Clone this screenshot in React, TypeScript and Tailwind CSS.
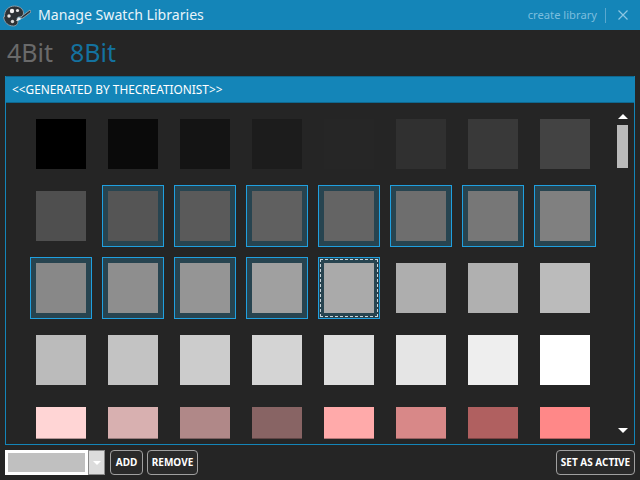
const grays = [
  "#000000", "#0a0a0a", "#141414", "#1c1c1c", "#262626", "#303030", "#393939", "#434343",
  "#4f4f4f", "#555555", "#5a5a5a", "#606060", "#646464", "#6e6e6e", "#777777", "#808080",
  "#888888", "#8e8e8e", "#959595", "#a0a0a0", "#aaaaaa", "#aeaeae", "#b0b0b0", "#bbbbbb",
  "#bbbbbb", "#c3c3c3", "#cccccc", "#d4d4d4", "#dddddd", "#e5e5e5", "#eeeeee", "#ffffff",
  "#ffd5d5", "#d8b0b0", "#b08888", "#886464", "#ffaaaa", "#d88888", "#b06060", "#ff8888",
];

function Swatch({ color, index }: { color: string; index: number }) {
  const selected = index >= 9 && index <= 20;
  const focused = index === 20;
  return (
    <div
      className={
        selected
          ? "relative flex h-[62px] w-[62px] items-center justify-center border border-[#1fa0e0] bg-[#274450]"
          : "flex h-[62px] w-[62px] items-center justify-center border border-transparent"
      }
    >
      {focused && (
        <div className="absolute inset-[1px] border border-dashed border-[#c8d4da]" />
      )}
      <div className="relative h-[50px] w-[50px]" style={{ backgroundColor: color }}>
        {index >= 32 && <div className="absolute inset-x-0 top-[31px] h-px bg-black/30" />}
      </div>
    </div>
  );
}

function Logo() {
  return (
    <svg width="28" height="26" viewBox="0 0 28 26" className="ml-[3px] shrink-0">
      <path d="M1.5 15C1 8 6 4 11.5 4c5 0 9 3 9 7 0 3-2 4-4 4-2 0-3 1-2 3 1 2 0 6-4 6-5 0-9-3-10-9z" fill="#2d3236" stroke="#8a9aa4" strokeWidth="1" />
      <circle cx="9" cy="9" r="2.2" fill="#f2f2f2" />
      <circle cx="14.5" cy="8.5" r="1.6" fill="#e8e8e8" />
      <circle cx="6" cy="14" r="1.7" fill="#e8e8e8" />
      <circle cx="9.5" cy="19.5" r="1.7" fill="#d8d8d8" />
      <path d="M27 8 19 14l-2 3 3-1 8-6z" fill="#2d3236" stroke="#9fb0ba" strokeWidth="0.8" />
      <path d="M16 15c-2 1-2 3-3 4 2 0 4-1 5-2z" fill="#eeeeee" />
    </svg>
  );
}

function Btn({ children, className }: { children: string; className: string }) {
  return (
    <button className={"flex h-[25px] items-center justify-center rounded-[4px] border border-[#a0a0a0] bg-[#2a2a2a] text-[10px] font-bold text-white " + className}>
      {children}
    </button>
  );
}

export default function App() {
  return (
    <div className="flex h-[480px] w-[640px] flex-col overflow-hidden bg-[#252525] font-['Noto_Sans','Open_Sans',sans-serif]">
      <div className="flex h-[30px] shrink-0 items-center bg-[#1485b8]">
        <Logo />
        <span className="ml-[7px] text-[14.1px] text-[#e8f4fa]">Manage Swatch Libraries</span>
        <span className="ml-auto text-[11.2px] text-[#7cbede]">create library</span>
        <div className="ml-[8px] h-[15px] w-px bg-[#5aa8cf]" />
        <svg width="10" height="10" viewBox="0 0 10 10" className="ml-[12px] mr-[12px]">
          <path d="M.5.5l9 9M9.5.5l-9 9" stroke="#8cc6e2" strokeWidth="1.2" fill="none" />
        </svg>
      </div>

      <div className="flex h-[46px] shrink-0 items-center gap-[17px] pb-[2px] pl-[7px] text-[25px] leading-none">
        <span className="text-[#6a6a6a]">4Bit</span>
        <span className="text-[#14729f]">8Bit</span>
      </div>

      <div className="mx-[5px] flex h-[369px] flex-col overflow-hidden border-x border-b border-[#1485b8]">
        <div className="flex h-[27px] shrink-0 items-center border-y border-y-[#0f6890] bg-[#1485b8] pl-[6px] text-[11.85px] text-white">
          {"<<GENERATED BY THECREATIONIST>>"}
        </div>
        <div className="mb-[5px] flex min-h-0 flex-1 overflow-hidden">
          <div className="grid h-fit grid-cols-[repeat(8,62px)] gap-[10px] pl-[24px] pt-[10px]">
            {grays.map((c, i) => (
              <Swatch key={i} color={c} index={i} />
            ))}
          </div>
          <div className="ml-[21px] flex w-[11px] flex-col items-center pt-[11px]">
            <div className="h-0 w-0 border-x-[5px] border-b-[5px] border-x-transparent border-b-white" />
            <div className="mt-[6px] h-[43px] w-[11px] bg-[#bbbbbb]" />
            <div className="mt-auto mb-[6px] h-0 w-0 border-x-[5px] border-t-[5px] border-x-transparent border-t-white" />
          </div>
        </div>
      </div>

      <div className="mx-[5px] mt-[5px] flex items-center">
        <div className="h-[25px] w-[83px] border-[3px] border-white bg-[#c0c0c0]" />
        <div className="flex h-[25px] w-[17px] items-center justify-center border border-[#8a8a8a] bg-[#dcdcdc]">
          <div className="h-0 w-0 border-x-[4px] border-t-[4px] border-x-transparent border-t-white" />
        </div>
        <Btn className="ml-[5px] w-[33px]">ADD</Btn>
        <Btn className="ml-[4px] w-[51px]">REMOVE</Btn>
        <Btn className="ml-auto w-[79px]">SET AS ACTIVE</Btn>
      </div>
    </div>
  );
}
